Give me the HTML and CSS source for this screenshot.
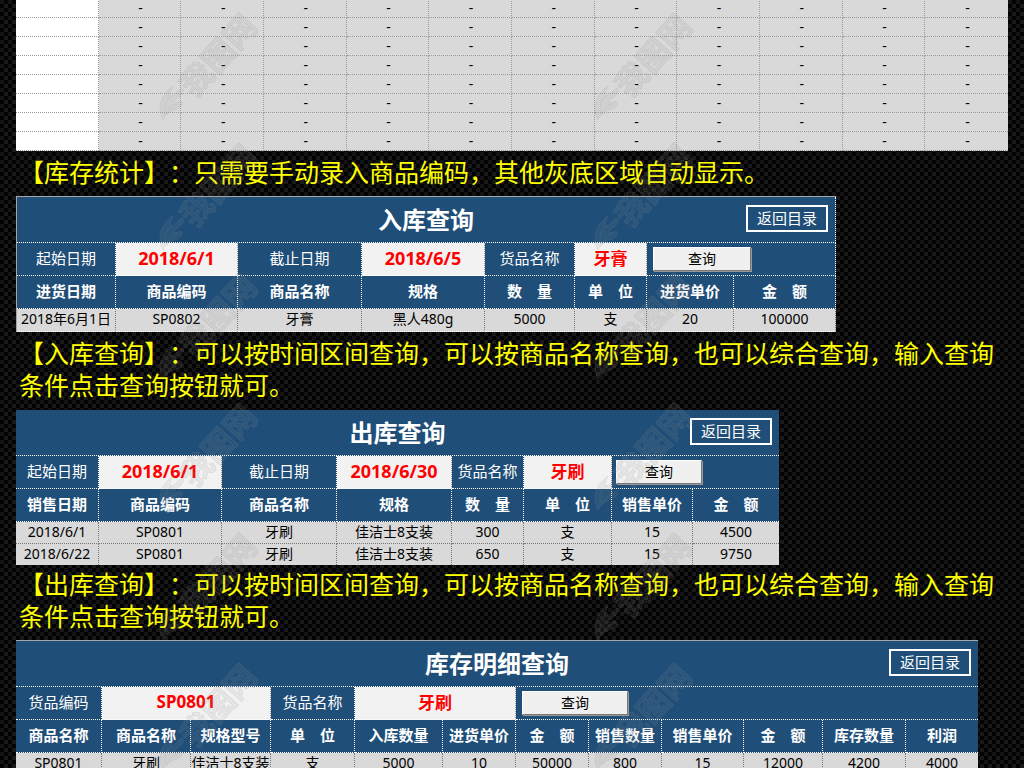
FILE: index.html
```html
<!DOCTYPE html>
<html lang="zh-CN">
<head>
<meta charset="utf-8">
<meta name="viewport" content="width=device-width, initial-scale=1">
<title>库存查询</title>
<link rel="stylesheet" href="styles.css">
</head>
<body>
<main class="page">
  <table class="stock" aria-label="库存统计">
    <tbody>
      <tr><td></td><td>-</td><td>-</td><td>-</td><td>-</td><td>-</td><td>-</td><td>-</td><td>-</td><td>-</td><td>-</td><td>-</td></tr>
      <tr><td></td><td>-</td><td>-</td><td>-</td><td>-</td><td>-</td><td>-</td><td>-</td><td>-</td><td>-</td><td>-</td><td>-</td></tr>
      <tr><td></td><td>-</td><td>-</td><td>-</td><td>-</td><td>-</td><td>-</td><td>-</td><td>-</td><td>-</td><td>-</td><td>-</td></tr>
      <tr><td></td><td>-</td><td>-</td><td>-</td><td>-</td><td>-</td><td>-</td><td>-</td><td>-</td><td>-</td><td>-</td><td>-</td></tr>
      <tr><td></td><td>-</td><td>-</td><td>-</td><td>-</td><td>-</td><td>-</td><td>-</td><td>-</td><td>-</td><td>-</td><td>-</td></tr>
      <tr><td></td><td>-</td><td>-</td><td>-</td><td>-</td><td>-</td><td>-</td><td>-</td><td>-</td><td>-</td><td>-</td><td>-</td></tr>
      <tr><td></td><td>-</td><td>-</td><td>-</td><td>-</td><td>-</td><td>-</td><td>-</td><td>-</td><td>-</td><td>-</td><td>-</td></tr>
      <tr><td></td><td>-</td><td>-</td><td>-</td><td>-</td><td>-</td><td>-</td><td>-</td><td>-</td><td>-</td><td>-</td><td>-</td></tr>
    </tbody>
  </table>
  <p class="note note-short">【库存统计】<span class="colon">：</span>只需要手动录入商品编码，其他灰底区域自动显示。</p>

  <table class="sheet sheet-in">
    <colgroup><col><col><col><col><col><col><col><col></colgroup>
    <tbody>
      <tr class="title-row"><td colspan="8"><div class="title-bar"><h2>入库查询</h2><a class="back" href="#">返回目录</a></div></td></tr>
      <tr class="form-row">
        <td><label for="in-from">起始日期</label></td>
        <td class="field"><input class="date" id="in-from" type="text" value="2018/6/1"></td>
        <td><label for="in-to">截止日期</label></td>
        <td class="field"><input class="date" id="in-to" type="text" value="2018/6/5"></td>
        <td><label for="in-name">货品名称</label></td>
        <td class="field"><input id="in-name" type="text" value="牙膏"></td>
        <td class="action" colspan="2"><button type="button">查询</button></td>
      </tr>
      <tr class="head-row"><th>进货日期</th><th>商品编码</th><th>商品名称</th><th>规格</th><th>数　量</th><th>单　位</th><th>进货单价</th><th>金　额</th></tr>
      <tr class="data-row"><td>2018年6月1日</td><td>SP0802</td><td>牙膏</td><td>黑人480g</td><td>5000</td><td>支</td><td>20</td><td>100000</td></tr>
    </tbody>
  </table>
  <p class="note">【入库查询】<span class="colon">：</span>可以按时间区间查询，可以按商品名称查询，也可以综合查询，输入查询条件点击查询按钮就可。</p>

  <table class="sheet sheet-out">
    <colgroup><col><col><col><col><col><col><col><col></colgroup>
    <tbody>
      <tr class="title-row"><td colspan="8"><div class="title-bar"><h2>出库查询</h2><a class="back" href="#">返回目录</a></div></td></tr>
      <tr class="form-row">
        <td><label for="out-from">起始日期</label></td>
        <td class="field"><input class="date" id="out-from" type="text" value="2018/6/1"></td>
        <td><label for="out-to">截止日期</label></td>
        <td class="field"><input class="date" id="out-to" type="text" value="2018/6/30"></td>
        <td><label for="out-name">货品名称</label></td>
        <td class="field"><input id="out-name" type="text" value="牙刷"></td>
        <td class="action" colspan="2"><button type="button">查询</button></td>
      </tr>
      <tr class="head-row"><th>销售日期</th><th>商品编码</th><th>商品名称</th><th>规格</th><th>数　量</th><th>单　位</th><th>销售单价</th><th>金　额</th></tr>
      <tr class="data-row"><td>2018/6/1</td><td>SP0801</td><td>牙刷</td><td>佳洁士8支装</td><td>300</td><td>支</td><td>15</td><td>4500</td></tr>
      <tr class="data-row"><td>2018/6/22</td><td>SP0801</td><td>牙刷</td><td>佳洁士8支装</td><td>650</td><td>支</td><td>15</td><td>9750</td></tr>
    </tbody>
  </table>
  <p class="note note-tight">【出库查询】<span class="colon">：</span>可以按时间区间查询，可以按商品名称查询，也可以综合查询，输入查询条件点击查询按钮就可。</p>

  <table class="sheet sheet-detail">
    <colgroup><col><col><col><col><col><col><col><col><col><col><col><col></colgroup>
    <tbody>
      <tr class="title-row"><td colspan="12"><div class="title-bar"><h2>库存明细查询</h2><a class="back" href="#">返回目录</a></div></td></tr>
      <tr class="form-row">
        <td><label for="d-code">货品编码</label></td>
        <td class="field" colspan="2"><input id="d-code" type="text" value="SP0801"></td>
        <td><label for="d-name">货品名称</label></td>
        <td class="field" colspan="2"><input id="d-name" type="text" value="牙刷"></td>
        <td class="action" colspan="6"><button type="button">查询</button></td>
      </tr>
      <tr class="head-row"><th>商品名称</th><th>商品名称</th><th>规格型号</th><th>单　位</th><th>入库数量</th><th>进货单价</th><th>金　额</th><th>销售数量</th><th>销售单价</th><th>金　额</th><th>库存数量</th><th>利润</th></tr>
      <tr class="data-row"><td>SP0801</td><td>牙刷</td><td>佳洁士8支装</td><td>支</td><td>5000</td><td>10</td><td>50000</td><td>800</td><td>15</td><td>12000</td><td>4200</td><td>4000</td></tr>
    </tbody>
  </table>
</main>
<svg class="watermark" aria-hidden="true">
  <defs>
    <pattern id="mark" width="435" height="130" patternUnits="userSpaceOnUse" x="155" y="4">
      <g fill="#909090" fill-opacity=".12" stroke="#909090" stroke-opacity=".14" stroke-width="1">
        <path d="M8 116C2 104 5 91 18 82C13 92 15 96 22 88C29 80 31 87 24 93C18 97 16 100 23 98C29 96 29 102 22 105C15 107 11 110 8 116Z"/>
        <path d="M11 110C8 101 12 94 18 91M12 111C14 104 18 101 23 100" fill="none"/>
        <text class="mark-text" transform="translate(40 95) rotate(-48)">我图网</text>
      </g>
    </pattern>
  </defs>
  <rect width="100%" height="100%" fill="url(#mark)"/>
</svg>
</body>
</html>
```
FILE: styles.css
```css
* { box-sizing: border-box; }

body {
  position: relative;
  margin: 0;
  height: 100vh;
  overflow: hidden;
  color: #000;
  font-family: "Noto Sans", "Noto Sans CJK SC", sans-serif;
  font-size: 14px;
  background-color: #020202;
  background-image: conic-gradient(#0000 25%, #191919 0 50%, #0000 0 75%, #131313 0);
  background-size: 8px 8px;
}

.page { padding: 0 16px; }

table {
  width: 100%;
  table-layout: fixed;
  border-collapse: separate;
  border-spacing: 0;
}

td, th {
  padding: 0;
  text-align: center;
  vertical-align: middle;
  white-space: nowrap;
}

/* Stock overview */
.stock { margin-top: -1px; }

.stock td {
  height: 19px;
  padding-left: 2px;
  line-height: 18px;
  background: #d9d9d9;
  border-right: 1px dotted #9a9a9a;
  border-bottom: 1px dotted #9a9a9a;
}

.stock td:first-child { background: #fff; }
.stock td:last-child { border-right: 0; }

/* Explanations between the sheets */
.note {
  margin: 0;
  padding: 4px 0 10px 3px;
  color: #ff0;
  font-family: "Noto Sans CJK SC", sans-serif;
  font-size: 25px;
  line-height: 32px;
  text-spacing-trim: space-all;
}

.note-short { padding-bottom: 9px; }
.note-tight { padding: 2px 0 9px 3px; }
.colon { font-family: "Noto Sans CJK JP", sans-serif; }

/* Query sheets */
.sheet td, .sheet th {
  border-right: 1px dotted #fff;
  border-bottom: 1px dotted #fff;
}

.title-row td, .form-row td, .head-row th {
  color: #fff;
  font-size: 15px;
  background: #1f4e78;
}

.title-row td { height: 46px; }
.form-row td, .head-row th { height: 33px; padding-bottom: 2px; line-height: 24px; }

.sheet .data-row td {
  height: 22px;
  padding-bottom: 2px;
  line-height: 18px;
  background: #d9d9d9;
  border-right-color: #777;
  border-bottom-color: #777;
}

.title-bar {
  display: grid;
  grid-template-columns: 1fr auto 1fr;
  align-items: center;
}

.title-bar h2 {
  grid-column: 2;
  margin: 0;
  font-size: 24px;
  line-height: 32px;
}

.back {
  justify-self: end;
  margin: 0 7px 2px 0;
  padding: 0 9px;
  border: 2px solid #fff;
  color: #fff;
  line-height: 23px;
  text-decoration: none;
}

.sheet .field { padding: 0; background: #f2f2f2; border-right-color: #999; }

.field input {
  display: block;
  width: 100%;
  height: 32px;
  padding: 0 0 3px;
  border: 0;
  background: none;
  color: #f00;
  font: bold 17px/24px "Noto Sans", "Noto Sans CJK SC", sans-serif;
  text-align: center;
}

.field .date { font-size: 18px; }

.sheet .action { padding: 0; text-align: left; }

.action button {
  display: block;
  width: 98px;
  height: 24px;
  margin-left: 6px;
  padding: 0;
  border: 1px solid;
  border-color: #fff #777 #777 #fff;
  box-shadow: 1px 1px 0 #999;
  background: #f0f0f0;
  color: #000;
  font: 14px/20px "Noto Sans", "Noto Sans CJK SC", sans-serif;
}

.sheet-in {
  max-width: 820px;
  border-top: 1px solid #a6a6a6;
  border-left: 1px solid #a6a6a6;
}

.sheet-in col:nth-child(1) { width: 99px; }
.sheet-in col:nth-child(2) { width: 122px; }
.sheet-in col:nth-child(3) { width: 124px; }
.sheet-in col:nth-child(4) { width: 123px; }
.sheet-in col:nth-child(5) { width: 90px; }
.sheet-in col:nth-child(6) { width: 72px; }
.sheet-in col:nth-child(7) { width: 87px; }
.sheet-in col:nth-child(8) { width: 102px; }
.sheet-in .data-row td { height: 23px; border-bottom-color: #fff; }

.sheet-out { max-width: 763px; }
.sheet-out col:nth-child(1) { width: 83px; }
.sheet-out col:nth-child(2) { width: 123px; }
.sheet-out col:nth-child(3) { width: 115px; }
.sheet-out col:nth-child(4) { width: 115px; }
.sheet-out col:nth-child(5) { width: 72px; }
.sheet-out col:nth-child(6) { width: 88px; }
.sheet-out col:nth-child(7) { width: 81px; }
.sheet-out col:nth-child(8) { width: 86px; }
.sheet-out .action button { width: 86px; margin-left: 4px; }
.sheet-out tr:last-child td { height: 21px; border-bottom: 0; }
.sheet-out tr > :last-child, .sheet-detail tr > :last-child { border-right: 0; }

.sheet-detail { max-width: 962px; border-top: 1px solid #a6a6a6; }
.sheet-detail col:nth-child(1) { width: 86px; }
.sheet-detail col:nth-child(2) { width: 89px; }
.sheet-detail col:nth-child(3) { width: 80px; }
.sheet-detail col:nth-child(4) { width: 84px; }
.sheet-detail col:nth-child(5) { width: 88px; }
.sheet-detail col:nth-child(6),
.sheet-detail col:nth-child(7),
.sheet-detail col:nth-child(8) { width: 73px; }
.sheet-detail col:nth-child(9) { width: 82px; }
.sheet-detail col:nth-child(10) { width: 79px; }
.sheet-detail col:nth-child(11) { width: 83px; }
.sheet-detail col:nth-child(12) { width: 72px; }
.sheet-detail .action button { width: 106px; }

/* Repeated translucent mark laid over the whole page */
.watermark {
  position: absolute;
  inset: 0;
  width: 100%;
  height: 100%;
  pointer-events: none;
}

.mark-text {
  font-family: "Noto Sans CJK SC", sans-serif;
  font-size: 32px;
  font-weight: bold;
}
```
